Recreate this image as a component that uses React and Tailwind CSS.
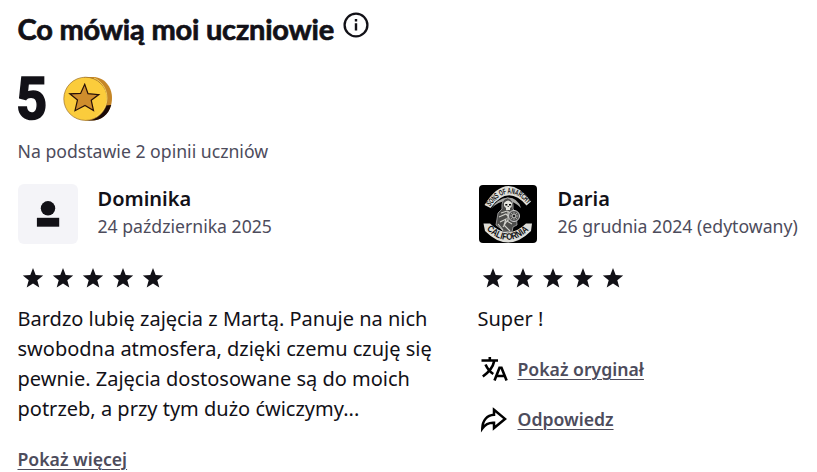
const reviews = [
  {
    id: 1,
    name: "Dominika",
    date: "24 października 2025",
    text: "Bardzo lubię zajęcia z Martą. Panuje na nich swobodna atmosfera, dzięki czemu czuję się pewnie. Zajęcia dostosowane są do moich potrzeb, a przy tym dużo ćwiczymy...",
    truncated: true,
  },
  {
    id: 2,
    name: "Daria",
    date: "26 grudnia 2024 (edytowany)",
    text: "Super !",
    translated: true,
  },
];

function InfoIcon() {
  return (
    <svg viewBox="0 0 26 26" className="size-[26px]" fill="none">
      <circle cx="13" cy="13" r="11.4" stroke="#121117" strokeWidth="2.3" />
      <path d="M13 7v2.5M13 11.2v7.3" stroke="#121117" strokeWidth="2.4" />
    </svg>
  );
}

function CoinIcon() {
  return (
    <svg viewBox="0 0 50 46" className="h-[46px] w-[50px]">
      <path
        d="M21 1H30C41 1 49 10.500 49 22C49 35 40 44.500 29 44.500H22Z"
        fill="#c58627"
      />
      <path
        d="M48.200 29C45.500 39 38 44.500 29 44.500H23C32 44 39 38 42.500 29.500Z"
        fill="#1a0a08"
      />
      <ellipse
        cx="22.500"
        cy="22.800"
        rx="21.700"
        ry="21.600"
        fill="#fbcc3c"
        stroke="#9b702b"
        strokeWidth=".7"
      />
      <path
        d="M33 40.500C39.500 36.500 44 30 44 22C44 13 38.500 5 31 2"
        fill="none"
        stroke="#ffdc67"
        strokeWidth=".8"
      />
      <path
        d="M21.700 8.300L25 17.700L35.800 18.600L28.200 24.200L30.500 34.500L22 29.500L12 34.700L14.500 24L6.800 17.800L17.600 17.400Z"
        fill="#cf8d2c"
        stroke="#281109"
        strokeWidth="1.200"
      />
    </svg>
  );
}

function Star() {
  return (
    <svg viewBox="0 0 30 30" className="size-[30px]" fill="#121117">
      <path d="M15 5L17.700 12.100L25.200 12.500L19.300 17.200L21.300 24.600L15 20.400L8.700 24.600L10.700 17.200L4.800 12.500L12.300 12.100Z" />
    </svg>
  );
}

function DefaultAvatar() {
  return (
    <div className="flex size-[60px] shrink-0 items-center justify-center rounded-md bg-[#f4f4f8]">
      <svg viewBox="0 0 30 30" className="size-[30px]" fill="#121117">
        <circle cx="15" cy="9.300" r="7.200" />
        <path d="M3.900 18.800H26.200V27.700H3.900Z" />
      </svg>
    </div>
  );
}

function BikerAvatar() {
  return (
    <div className="flex size-[60px] shrink-0 items-center justify-center">
      <svg viewBox="0 0 58 58" className="size-[58px] rounded-sm bg-black">
        <defs>
          <path id="top-arc" d="M11 21.500Q29 -3 48 18.500" />
          <path id="bottom-arc" d="M7.500 44.500Q29 65.500 51 44" />
        </defs>
        <path
          d="M5.500 20Q28 -16 52 16.500L47.500 20.500Q29 -1 11.500 23Z"
          fill="#deded9"
        />
        <path
          d="M4.500 38.500L11 38.500Q29 56 47 38.500L53 38.500L52 46Q29 69 6 46Z"
          fill="#deded9"
        />
        <text
          fontSize="8"
          className="font-['Liberation_Sans',sans-serif] font-bold"
          fill="#111"
        >
          <textPath href="#top-arc" textLength="46" lengthAdjust="spacingAndGlyphs">
            SONS OF ANARCHY
          </textPath>
        </text>
        <text
          fontSize="9.500"
          className="font-['Liberation_Sans',sans-serif] font-bold"
          fill="#111"
        >
          <textPath href="#bottom-arc" textLength="48" lengthAdjust="spacingAndGlyphs">
            CALIFORNIA
          </textPath>
        </text>
        {/* scythe and hood */}
        <path
          d="M12 24Q18 13.500 29 12.500Q39 13 42 23Q35 16 28 16Q19 16 12 24Z"
          fill="#a9a9a5"
        />
        <path
          d="M23 24Q22 14 28.500 13Q35 14 34 24L37 27L38 40L34 42L33 47L24 46L21 43L17 40L19 28Z"
          fill="#4d4d4b"
          stroke="#aaa"
          strokeWidth=".8"
        />
        <path
          d="M25 18Q29 13 33 18L32.500 22L31 23V25H27V23L25 21Z"
          fill="#e6e6df"
        />
        <path d="M26.300 19h2v1.500h-2zM30 19h2v1.500h-2zM28.700 21h1v1h-1z" />
        <path
          d="M22 28L28 26L34 29M20 32L27 29L32 34M21 37L27 34L25 40L31 46M24 42L28 36L33 39M19 39L24 45M29 27V36"
          fill="none"
          stroke="#d1d1cb"
          strokeWidth="1.100"
        />
        <circle cx="35" cy="31" r="5.500" fill="#555" stroke="#ccc" />
        <path
          d="M31 31h8M35 27v8M32 28l6 6M32 34l6-6"
          stroke="#c5c5bd"
          strokeWidth=".7"
        />
        <circle cx="35" cy="31" r="1.700" fill="#222" stroke="#ddd" strokeWidth=".6" />
      </svg>
    </div>
  );
}

function TranslateIcon() {
  return (
    <svg
      viewBox="0 0 30 30"
      className="size-[30px]"
      fill="none"
      stroke="#000"
      strokeWidth="2.600"
    >
      <path d="M3.500 6.500H20M11.800 3V6.500M4.800 22.500C10.500 18.500 15 13.500 16.300 6.800M7.500 10.500C9.500 14.800 12 18 15.300 20" />
      <path d="M16.500 26.500L21.500 13.700H23.500L28.600 26.500M18.500 22H26.700" />
    </svg>
  );
}

function ReplyIcon() {
  return (
    <svg
      viewBox="0 0 30 30"
      className="size-[30px]"
      fill="none"
      stroke="#000"
      strokeWidth="2.500"
    >
      <path d="M16 5.800L27 14.900L16 24V18.800C11 18.500 7.500 20 4.300 24.400C4.500 16.500 9 11.200 16 10.800Z" />
    </svg>
  );
}

function TextButton({ children }) {
  return (
    <button className="text-[17.65px] leading-[30px] font-semibold text-[#4d4c5c] underline decoration-1 underline-offset-[3px]">
      {children}
    </button>
  );
}

function Review({ review }) {
  return (
    <div>
      <div className="flex gap-5">
        {review.id === 1 ? <DefaultAvatar /> : <BikerAvatar />}
        <div className="whitespace-nowrap">
          <p className="text-xl leading-[30px] font-semibold">{review.name}</p>
          <p className="text-[17.65px] leading-[25px] text-[#4d4c5c]">
            {review.date}
          </p>
        </div>
      </div>
      <div className="mt-[19px] flex">
        {[1, 2, 3, 4, 5].map((n) => (
          <Star key={n} />
        ))}
      </div>
      <p className="mt-[11px] text-xl leading-[30px]">{review.text}</p>
      {review.truncated && (
        <div className="mt-5">
          <TextButton>Pokaż więcej</TextButton>
        </div>
      )}
      {review.translated && (
        <div className="mt-5 flex flex-col gap-5">
          <div className="flex gap-2.5">
            <TranslateIcon />
            <TextButton>Pokaż oryginał</TextButton>
          </div>
          <div className="flex gap-2.5">
            <ReplyIcon />
            <TextButton>Odpowiedz</TextButton>
          </div>
        </div>
      )}
    </div>
  );
}

export default function App() {
  return (
    <section className="h-[472px] w-[817px] overflow-hidden bg-white pt-3 pl-[17.5px] font-['Noto_Sans',sans-serif] text-[#121117]">
      <div className="flex h-9 items-start gap-[7px]">
        <h2 className="w-[318px] font-['Lato',sans-serif] text-[29px] leading-[34px] font-bold tracking-[-0.2px] whitespace-nowrap [-webkit-text-stroke:0.7px_#121117]">
          Co mówią moi uczniowie
        </h2>
        <InfoIcon />
      </div>
      <div className="mt-[21px] flex h-[60px] items-center">
        <span className="-ml-0.5 w-[47px] origin-left scale-x-[.92] font-['Roboto',sans-serif] text-[59px] leading-[60px] font-bold [-webkit-text-stroke:1.6px_#121117]">
          5
        </span>
        <CoinIcon />
      </div>
      <p className="mt-2.5 text-[17.65px] leading-[25px] text-[#4d4c5c]">
        Na podstawie 2 opinii uczniów
      </p>
      <div className="mt-5 grid grid-cols-[430px_330px] gap-[30px]">
        {reviews.map((review) => (
          <Review key={review.id} review={review} />
        ))}
      </div>
    </section>
  );
}
